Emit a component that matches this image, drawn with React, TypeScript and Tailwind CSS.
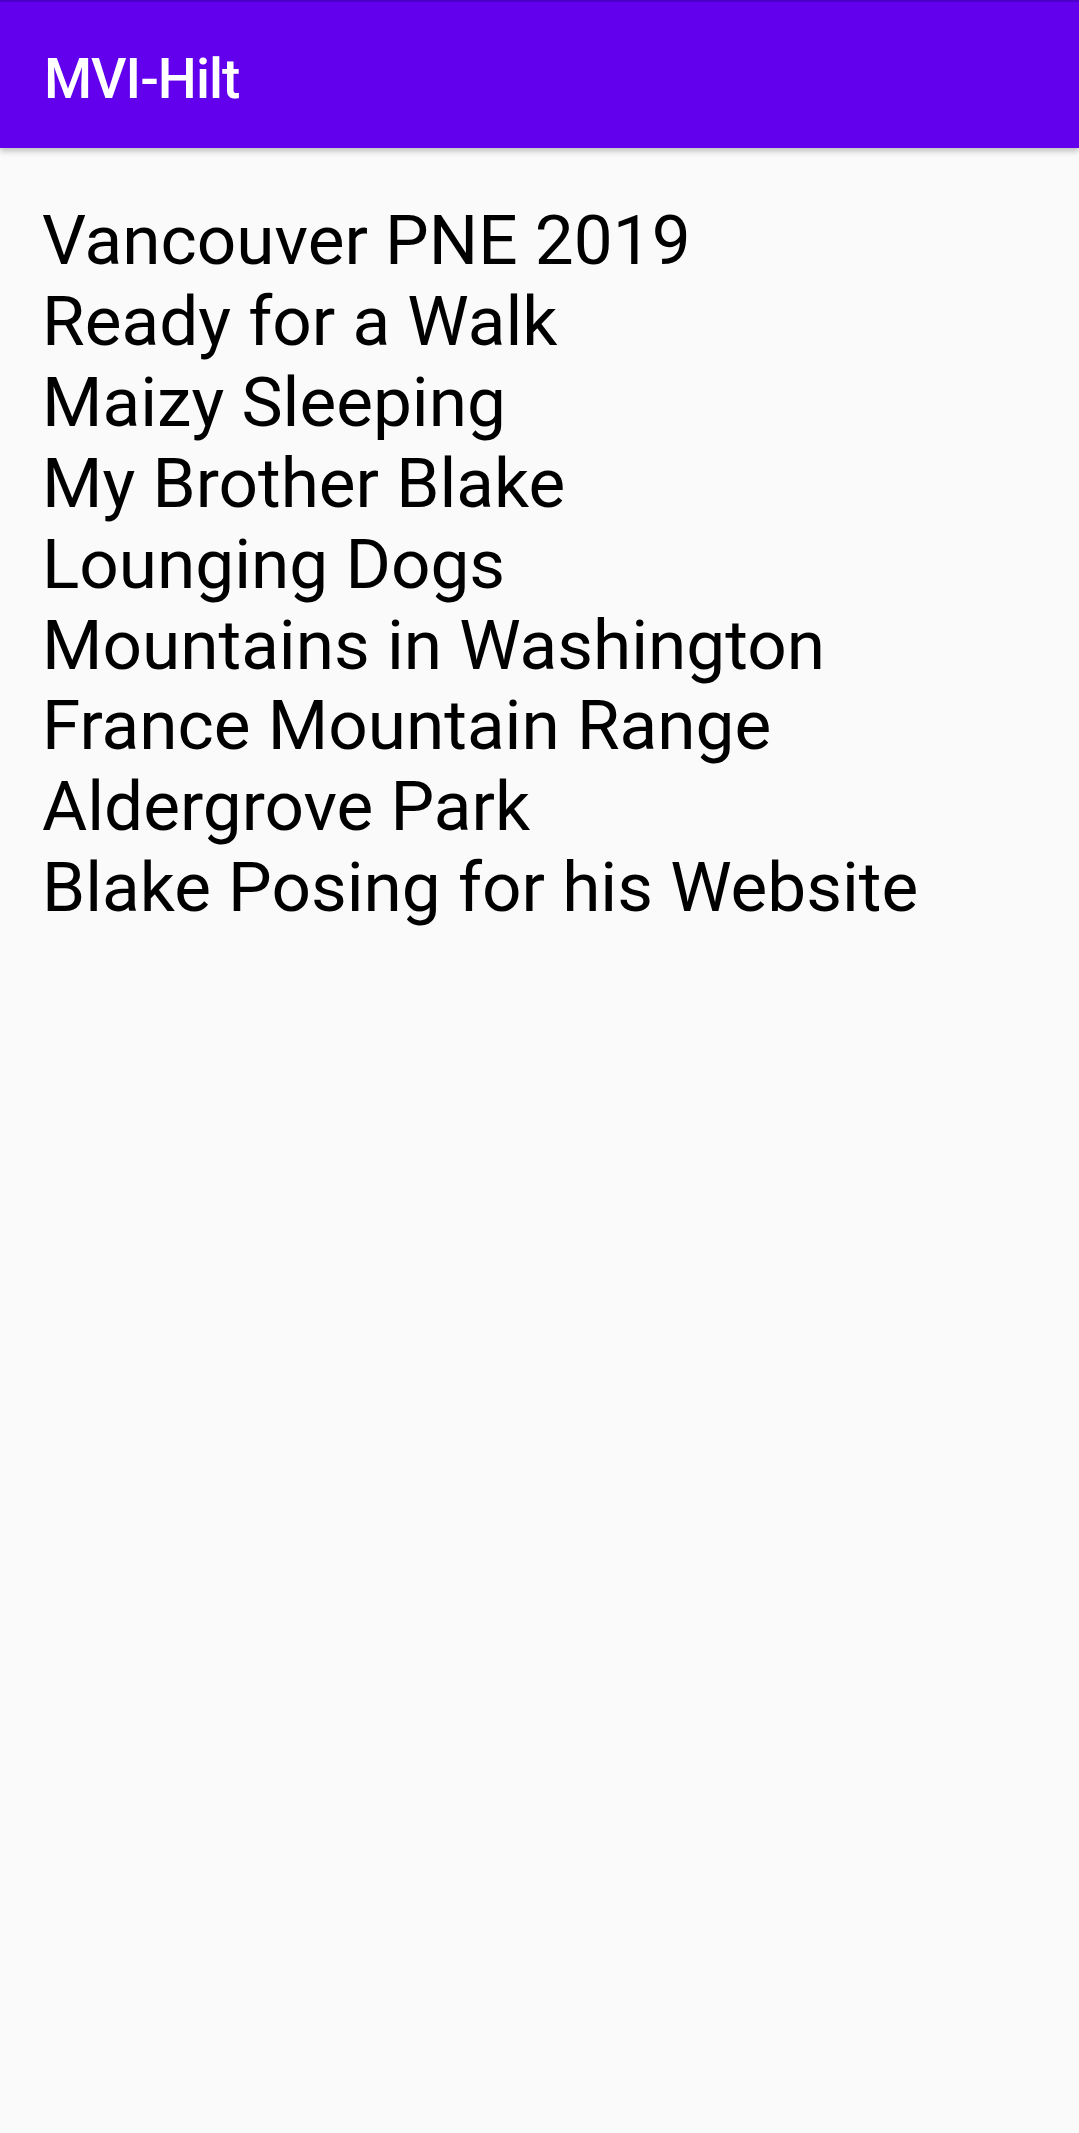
const titles = [
  "Vancouver PNE 2019",
  "Ready for a Walk",
  "Maizy Sleeping",
  "My Brother Blake",
  "Lounging Dogs",
  "Mountains in Washington",
  "France Mountain Range",
  "Aldergrove Park",
  "Blake Posing for his Website",
];

const App = () => {
  return (
    <div className="min-h-[2133px] bg-[#fafafa] font-['Roboto',sans-serif]">
      {/* App bar */}
      <header className="relative z-10 h-[148px] border-t-2 border-[#4a00c8] bg-[#6200ee] shadow-[0_3px_6px_rgba(0,0,0,0.25)]">
        <h1 className="pl-[44px] pt-[45px] text-[55px] font-medium leading-[normal] tracking-[-1px] text-white">
          MVI-Hilt
        </h1>
      </header>

      {/* Blog list */}
      <ul className="pl-[42px] pt-[53px]">
        {titles.map((t) => (
          <li key={t} className="text-[69.3px] leading-[80.9px] text-black">
            {t}
          </li>
        ))}
      </ul>
    </div>
  );
};

export default App;
